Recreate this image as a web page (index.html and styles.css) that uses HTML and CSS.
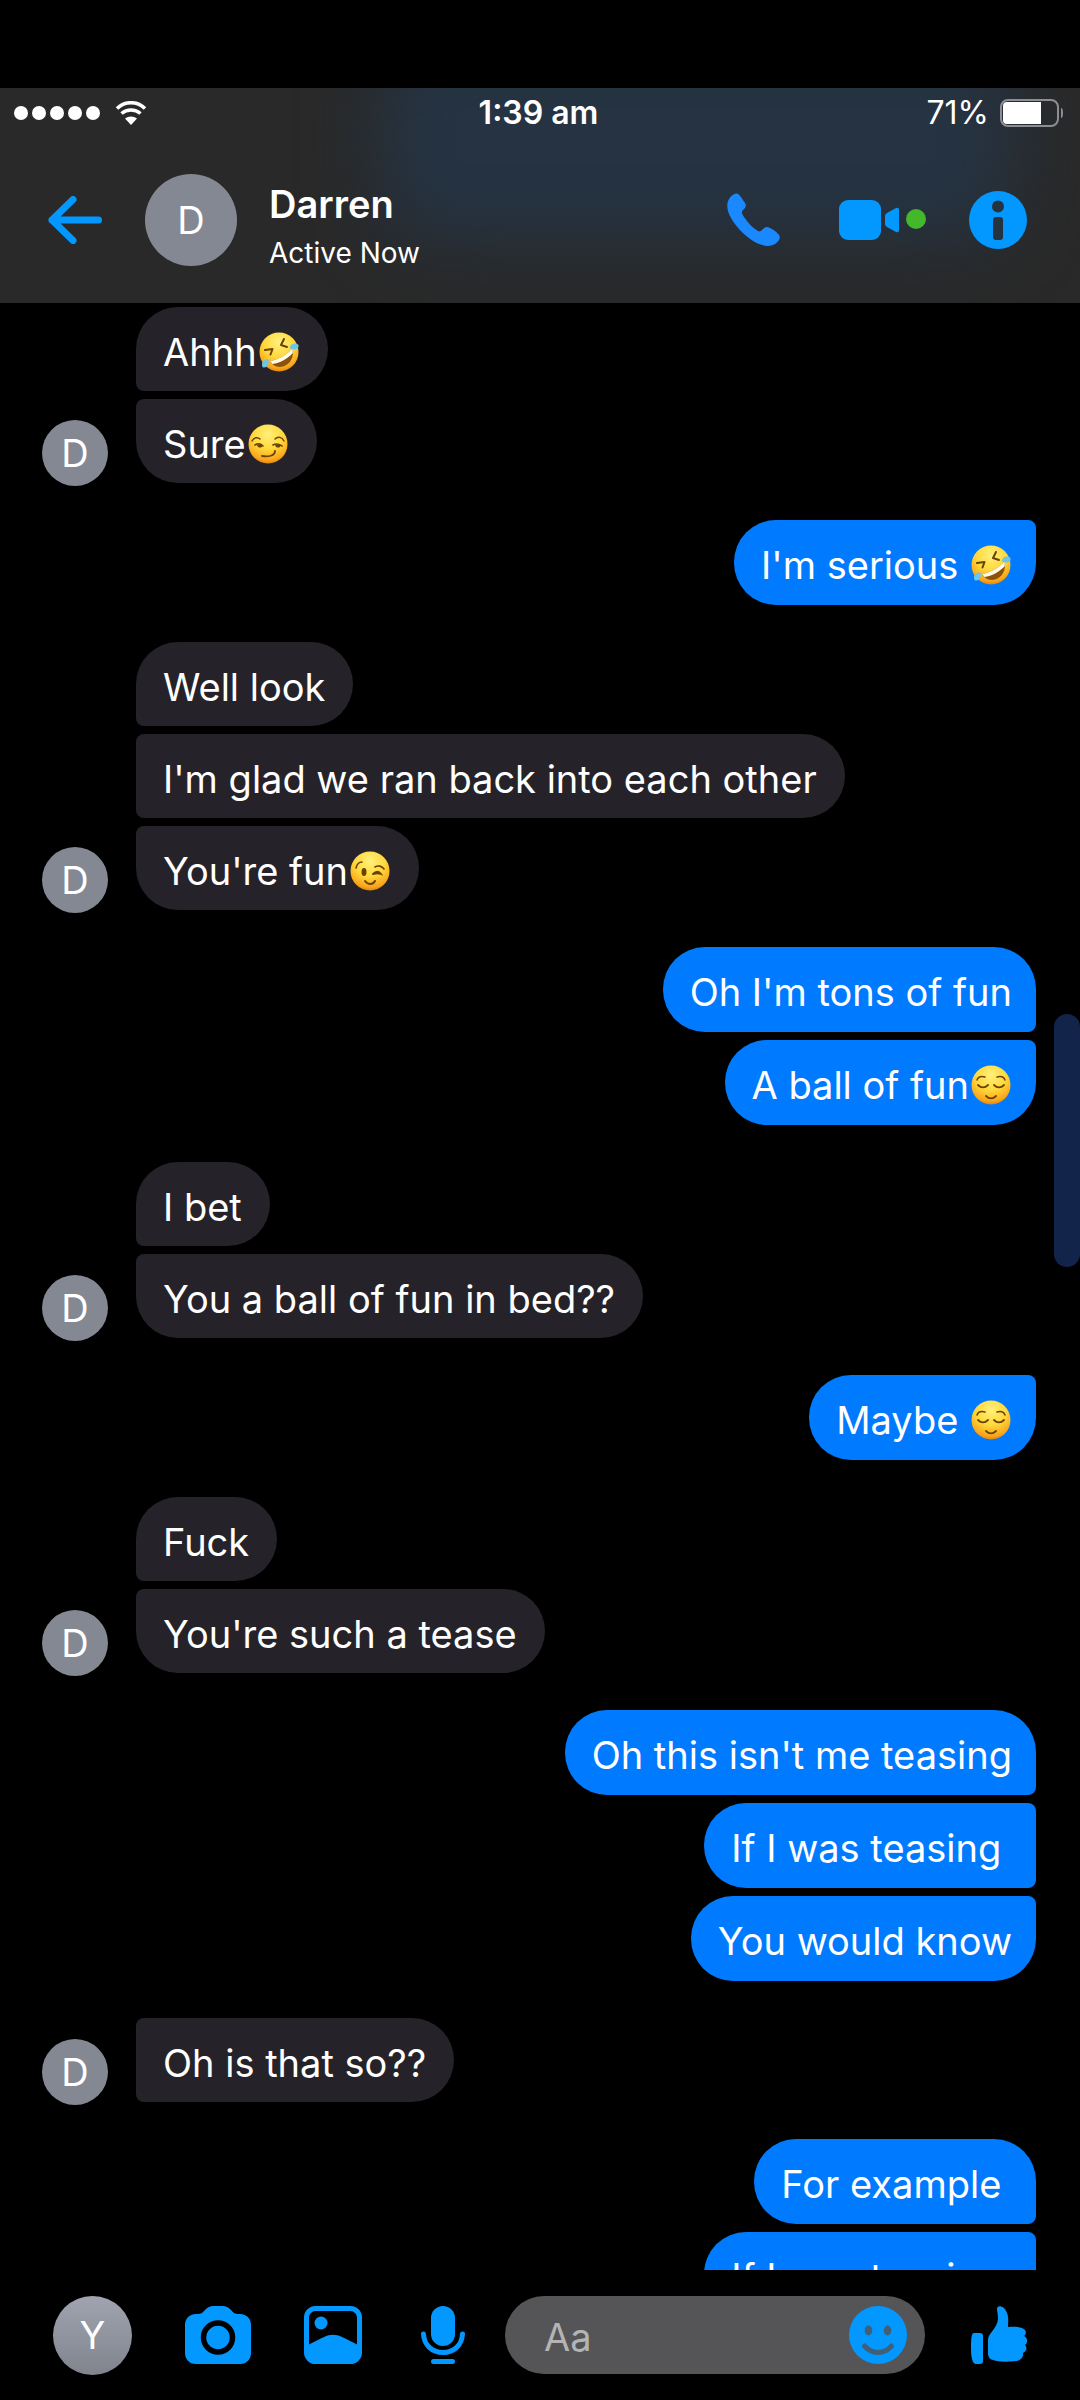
FILE: index.html
```html
<!DOCTYPE html>
<html lang="en">
<head>
<meta charset="utf-8">
<meta name="viewport" content="width=device-width">
<title>Darren</title>
<link rel="stylesheet" href="styles.css">
</head>
<body>
<svg class="defs" aria-hidden="true">
  <defs>
    <radialGradient id="face" cx="50%" cy="25%" r="78%">
      <stop offset="0" stop-color="#fff07c"/>
      <stop offset="0.5" stop-color="#ffd83a"/>
      <stop offset="0.85" stop-color="#f9a51b"/>
      <stop offset="1" stop-color="#d97c0c"/>
    </radialGradient>
    <symbol id="rofl" viewBox="0 0 40 40">
      <circle cx="20" cy="20" r="19.5" fill="url(#face)"/>
      <path d="M6 18L13.500 17L11.500 22.500M25 7L22 13L28 15" fill="none" stroke="#6b4205" stroke-width="2" stroke-linecap="round" stroke-linejoin="round"/>
      <path d="M11 29C19 28 27 23 33 17C36 24 31 33 24 34.500C18 36 13 33 11 29Z" fill="#8a520a"/>
      <path d="M11 29C19 28 27 23 33 17C34 18.500 34 20 33.500 21.500C28 27 21 31 13.500 32Z" fill="#fffbe8"/>
      <path d="M30.500 16C32 11 37 10.500 39.500 13C40.500 17 35 19 30.500 16ZM9.500 27.500C4 27 2 31 3.500 35C7 37 11 33 9.500 27.500Z" fill="#6cc6ea"/>
    </symbol>
    <symbol id="smirk" viewBox="0 0 40 40">
      <circle cx="20" cy="20" r="19.5" fill="url(#face)"/>
      <g fill="none" stroke="#6b4205" stroke-linecap="round">
        <path d="M4 17C6 13 10 13 12 15M27 15C30 12 34 13 36 17" stroke-width="1.4"/>
        <path d="M7 21C10 19 13 20 15 22M25 21C28 19 31 20 34 22" stroke-width="1.6"/>
        <path d="M14 32C20 33 27 32 27 27" stroke-width="1.8"/>
      </g>
      <path d="M9 21H14V23C12 24 10 24 9 21ZM27 21H32V23C30 24 28 24 27 21Z" fill="#6b4205"/>
    </symbol>
    <symbol id="wink" viewBox="0 0 40 40">
      <circle cx="20" cy="20" r="19.5" fill="url(#face)"/>
      <ellipse cx="14" cy="21" rx="2.5" ry="4" fill="#6b4205"/>
      <g fill="none" stroke="#6b4205" stroke-linecap="round">
        <path d="M6 17C7 13 9 11 12 11M25 16C28 14 32 15 34 18" stroke-width="1.6"/>
        <path d="M23 23C26 20 29 20 31 23C28 22 26 22 24 23" stroke-width="1.8"/>
        <path d="M15 30C18 34 23 34 25 30" stroke-width="2"/>
      </g>
    </symbol>
    <symbol id="relieved" viewBox="0 0 40 40">
      <circle cx="20" cy="20" r="19.5" fill="url(#face)"/>
      <g fill="none" stroke="#6b4205" stroke-linecap="round">
        <path d="M6 15C7 12 10 11 14 12M26 12C30 11 33 12 34 15" stroke-width="1.5"/>
        <path d="M7 20C10 23 14 23 17 20M23 20C26 23 30 23 33 20" stroke-width="1.8"/>
        <path d="M15 31C18 34 22 34 25 31" stroke-width="1.8"/>
      </g>
    </symbol>
  </defs>
</svg>

<div class="app">
  <header class="top">
    <div class="status">
      <div class="signal">
        <span class="dots"><i></i><i></i><i></i><i></i><i></i></span>
        <svg class="wifi" viewBox="0 0 32 24" aria-label="Wi-Fi">
          <path d="M2 7.500C10-.2 22-.2 30 7.500M6.500 12.500C12 7.800 20 7.800 25.500 12.500" fill="none" stroke="#fff" stroke-width="3.600"/>
          <path d="M10 17.500C13.500 14.800 18.500 14.800 22 17.500L16 24Z" fill="#fff"/>
        </svg>
      </div>
      <time class="clock">1:39 am</time>
      <div class="power">
        <span>71%</span>
        <svg class="battery" viewBox="0 0 63 28" aria-hidden="true">
          <rect x="1" y="1" width="57" height="26" rx="7" fill="none" stroke="#8b8f94" stroke-width="2"/>
          <path d="M41 3V25H7Q3 25 3 21V7Q3 3 7 3Z" fill="#fff"/>
          <path d="M61 9Q63 9 63 14Q63 19 61 19Z" fill="#8b8f94"/>
        </svg>
      </div>
    </div>
    <div class="contact">
      <button class="icon" aria-label="Back">
        <svg width="54" height="48" viewBox="0 0 54 48"><path d="M25 3.500L4 24L25 44.500M4 24H50.500" fill="none" stroke="currentColor" stroke-width="7" stroke-linecap="round" stroke-linejoin="round"/></svg>
      </button>
      <span class="avatar avatar-lg">D</span>
      <div class="who">
        <h1>Darren</h1>
        <p>Active Now</p>
      </div>
      <nav class="actions">
        <button class="icon call" aria-label="Call">
          <svg width="53" height="53" viewBox="0 0 53 53"><path d="M9 .5C12 0 14 4 18 10C20 13 18 15 16 17C14 19 15 21 17 24C21 30 26 35 31 38C33 39 34 38 36 36C38 34 40 33 43 35C47 37 50 39 52 42C54 45 52 48 48 51C43 54 37 53 32 51C20 46 5 31 1 18C-1 11 1 3 9 .5Z" fill="currentColor"/></svg>
        </button>
        <button class="icon video" aria-label="Video call">
          <svg width="87" height="40" viewBox="0 0 87 40"><rect width="42" height="40" rx="9" fill="currentColor"/><path d="M46 16Q46 14 48 13L57 8Q60 7 60 10V30Q60 33 57 32L48 27Q46 26 46 24Z" fill="currentColor"/><circle cx="77" cy="19" r="10" fill="#43b82b"/></svg>
        </button>
        <button class="icon" aria-label="Conversation information">
          <svg width="58" height="58" viewBox="0 0 58 58"><circle cx="29" cy="29" r="29" fill="currentColor"/><circle cx="29" cy="15.500" r="6" fill="#25323f"/><rect x="24" y="26" width="10" height="23" rx="3" fill="#25323f"/></svg>
        </button>
      </nav>
    </div>
  </header>

  <main class="thread">
    <section class="group in">
      <span class="avatar">D</span>
      <ul>
        <li>Ahhh<svg class="emoji" role="img" aria-label="🤣"><use href="#rofl"/></svg></li>
        <li>Sure<svg class="emoji" role="img" aria-label="😏"><use href="#smirk"/></svg></li>
      </ul>
    </section>
    <section class="group out">
      <ul class="continued">
        <li>I'm serious <svg class="emoji" role="img" aria-label="🤣"><use href="#rofl"/></svg></li>
      </ul>
    </section>
    <section class="group in">
      <span class="avatar">D</span>
      <ul>
        <li>Well look</li>
        <li>I'm glad we ran back into each other</li>
        <li>You're fun<svg class="emoji" role="img" aria-label="😉"><use href="#wink"/></svg></li>
      </ul>
    </section>
    <section class="group out">
      <ul>
        <li>Oh I'm tons of fun</li>
        <li>A ball of fun<svg class="emoji" role="img" aria-label="😌"><use href="#relieved"/></svg></li>
      </ul>
    </section>
    <section class="group in">
      <span class="avatar">D</span>
      <ul>
        <li>I bet</li>
        <li>You a ball of fun in bed??</li>
      </ul>
    </section>
    <section class="group out">
      <ul class="continued">
        <li>Maybe <svg class="emoji" role="img" aria-label="😌"><use href="#relieved"/></svg></li>
      </ul>
    </section>
    <section class="group in">
      <span class="avatar">D</span>
      <ul>
        <li>Fuck</li>
        <li>You're such a tease</li>
      </ul>
    </section>
    <section class="group out">
      <ul>
        <li>Oh this isn't me teasing</li>
        <li>If I was teasing </li>
        <li>You would know</li>
      </ul>
    </section>
    <section class="group in">
      <span class="avatar">D</span>
      <ul class="continued">
        <li>Oh is that so??</li>
      </ul>
    </section>
    <section class="group out">
      <ul>
        <li>For example </li>
        <li>If I was teasing </li>
      </ul>
    </section>
    <div class="scroll-thumb"></div>
  </main>

  <footer class="bar">
    <span class="avatar avatar-me">Y</span>
    <div class="tools">
      <button class="icon" aria-label="Camera">
        <svg width="66" height="58" viewBox="0 0 66 58"><path d="M11 8C17 8 17 7 20 4C23 1 25 0 28 0H38C41 0 43 1 46 4C49 7 49 8 55 8C62 8 66 13 66 19V47C66 53 62 58 55 58H11C4 58 0 53 0 47V19C0 13 4 8 11 8Z" fill="currentColor"/><circle cx="33" cy="31.500" r="14.500" fill="none" stroke="#000" stroke-width="5.500"/></svg>
      </button>
      <button class="icon" aria-label="Photos">
        <svg width="58" height="58" viewBox="0 0 58 58"><rect x="2.500" y="2.500" width="53" height="53" rx="9" fill="none" stroke="currentColor" stroke-width="5"/><circle cx="17" cy="17" r="6.500" fill="currentColor"/><path d="M4 39C10 36 15 33 20 31C26 28 32 28 38 31C43 33 48 36 54 39V54H4Z" fill="currentColor"/></svg>
      </button>
      <button class="icon" aria-label="Voice message">
        <svg width="56" height="58" viewBox="-6 0 56 58"><rect x="10" width="24" height="40" rx="12" fill="currentColor"/><path d="M2.500 28C3 39 11 46.500 22 46.500S41 39 41.500 28M12.500 55.500H31.500" fill="none" stroke="currentColor" stroke-width="5" stroke-linecap="round"/></svg>
      </button>
    </div>
    <form class="composer">
      <input type="text" placeholder="Aa" aria-label="Message">
      <button class="icon" type="button" aria-label="Emoji">
        <svg width="58" height="58" viewBox="0 0 58 58"><circle cx="29" cy="29" r="29" fill="currentColor"/><ellipse cx="19.500" cy="24.500" rx="3.800" ry="5" fill="#3f6078"/><ellipse cx="38.500" cy="24.500" rx="3.800" ry="5" fill="#3f6078"/><path d="M15.500 40C23 48.500 35 48.500 42.500 40" fill="none" stroke="#3f6078" stroke-width="5" stroke-linecap="round"/></svg>
      </button>
    </form>
    <button class="icon" aria-label="Like">
      <svg width="56" height="58" viewBox="0 0 56 58"><path d="M3 27H9Q12 27 12 30V55Q12 58 9 58H5C1 58 0 50 0 42C0 35 0 27 3 27Z" fill="currentColor"/><path d="M26 3C26-1 33-1 36 7C38 12 37 17 37 21C43 20 51 21 54 24C56 27 54 29 53 30C57 32 57 37 54 39C57 42 55 46 52 47C53 51 49 55 45 55C38 56 27 56 22 54C18 53 17 50 17 47V34C17 27 26 23 27 13C27 8 26 5 26 3Z" fill="currentColor"/></svg>
    </button>
  </footer>
</div>
</body>
</html>
```
FILE: styles.css
```css
* {
  box-sizing: border-box;
  margin: 0;
  padding: 0;
}

body {
  background: #000;
  color: #fff;
  font-family: Inter, "Liberation Sans", sans-serif;
  font-size: 38px;
  line-height: 46px;
}

ul {
  list-style: none;
}

svg {
  display: block;
}

.defs {
  position: absolute;
  width: 0;
  height: 0;
}

.app {
  display: flex;
  flex-direction: column;
  height: 100vh;
  padding-top: 88px;
}

.icon {
  flex: none;
  border: 0;
  background: none;
  color: #0398ff;
}

.avatar {
  display: grid;
  flex: none;
  place-items: center;
  width: 66px;
  height: 66px;
  border-radius: 50%;
  background: #848893;
}

.avatar-lg {
  width: 92px;
  height: 92px;
}

.avatar-me {
  width: 79px;
  height: 79px;
  background: linear-gradient(#a0a4b0, #80848d);
}

/* Header */

.top {
  position: relative;
  flex: none;
  isolation: isolate;
  overflow: hidden;
  padding-bottom: 2px;
  background: #292929;
}

.top::before {
  content: "";
  position: absolute;
  z-index: -1;
  inset: -60px 6% 60px 35%;
  border-radius: 60px;
  background: #253342;
  filter: blur(36px);
}

.status {
  display: grid;
  grid-template-columns: 1fr auto 1fr;
  align-items: center;
  height: 50px;
  padding: 0 17px 0 14px;
}

.signal,
.dots,
.power {
  display: flex;
  align-items: center;
}

.signal {
  gap: 15px;
}

.dots {
  gap: 4px;
}

.dots i {
  width: 14px;
  height: 14px;
  border-radius: 50%;
  background: #fff;
}

.wifi {
  width: 32px;
  height: 24px;
}

.clock {
  font-size: 32px;
  font-weight: 600;
}

.power {
  justify-content: flex-end;
  gap: 11px;
  font-size: 32px;
}

.battery {
  width: 63px;
  height: 28px;
}

.contact {
  display: flex;
  align-items: center;
  height: 163px;
  padding: 0 53px 0 48px;
}

.contact .avatar {
  margin: 0 32px 0 43px;
}

.who {
  padding-top: 12px;
}

.who h1 {
  font-size: 38px;
  font-weight: 600;
  line-height: 46px;
}

.who p {
  padding-top: 8px;
  font-size: 28px;
  line-height: 36px;
}

.actions {
  display: flex;
  align-items: center;
  margin-left: auto;
}

.call {
  margin-right: 59px;
  color: #1a88ff;
}

.video {
  margin-right: 43px;
}

/* Messages */

.thread {
  position: relative;
  display: flex;
  flex: 1;
  flex-direction: column;
  gap: 37px;
  min-height: 0;
  overflow: hidden;
  padding: 4px 44px 0 42px;
}

.group {
  display: flex;
  flex: none;
  align-items: flex-end;
  gap: 28px;
}

.group ul {
  display: flex;
  flex-direction: column;
  align-items: flex-start;
  gap: 8px;
}

.group li {
  padding: 22px 28px 16px 27px;
  border-radius: 8px 42px 42px 8px;
  background: #252329;
  white-space: pre-wrap;
}

.in li:first-child {
  border-top-left-radius: 42px;
}

.in li:last-child {
  border-bottom-left-radius: 42px;
}

.in .continued li {
  border-top-left-radius: 8px;
  border-bottom-left-radius: 8px;
}

.group .avatar {
  margin-bottom: -3px;
}

.out {
  justify-content: flex-end;
}

.out ul {
  align-items: flex-end;
}

.out li {
  padding: 22px 24px 17px 27px;
  border-radius: 42px 8px 8px 42px;
  background: #007aff;
}

.out li:first-child {
  border-top-right-radius: 42px;
}

.out li:last-child {
  border-bottom-right-radius: 42px;
}

.out .continued li {
  border-top-right-radius: 8px;
}

.emoji {
  display: inline-block;
  width: 40px;
  height: 40px;
  margin: 0 1px 0 2px;
  vertical-align: -6px;
}

.scroll-thumb {
  position: absolute;
  right: 0;
  bottom: 51%;
  width: 26px;
  height: 253px;
  border-radius: 13px;
  background: #12244a;
}

/* Composer bar */

.bar {
  display: flex;
  flex: none;
  align-items: center;
  height: 130px;
  padding: 0 53px;
}

.tools {
  display: flex;
  align-items: center;
  gap: 53px;
  margin-left: 53px;
}

.composer {
  display: flex;
  flex: 1;
  align-items: center;
  min-width: 0;
  height: 78px;
  margin: 0 46px 0 34px;
  padding: 3px 18px 0 39px;
  border-radius: 39px;
  background: #555557;
}

.composer .icon {
  margin-top: -3px;
}

.composer input {
  flex: 1;
  min-width: 0;
  border: 0;
  outline: 0;
  background: none;
  color: #fff;
  font: inherit;
}

.composer input::placeholder {
  color: #b4b4b4;
  opacity: 1;
}
```
